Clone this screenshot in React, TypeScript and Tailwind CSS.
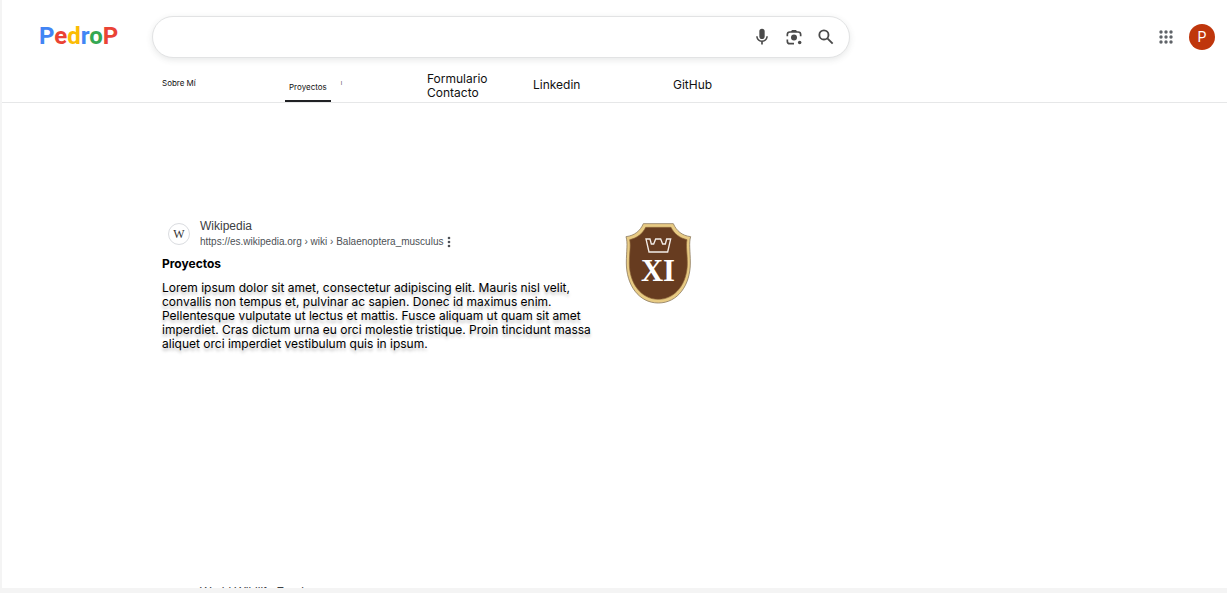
import React from "react";

const logoLetters = [
  { char: "P", color: "text-[#4285f4]" },
  { char: "e", color: "text-[#ea4335]" },
  { char: "d", color: "text-[#fbbc05]" },
  { char: "r", color: "text-[#4285f4]" },
  { char: "o", color: "text-[#34a853]" },
  { char: "P", color: "text-[#ea4335]" },
];

function MicIcon() {
  return (
    <svg viewBox="0 0 24 24" className="size-5" fill="currentColor" aria-hidden="true">
      <path d="M12 14.5c1.8 0 3.2-1.4 3.2-3.2V5.2a3.2 3.2 0 0 0-6.4 0v6.1c0 1.8 1.4 3.2 3.2 3.2z" />
      <path d="M17.2 11c0 2.9-2.3 5.1-5.2 5.1S6.800 13.900 6.800 11H5c0 3.500 2.600 6.300 6 6.800V21h2v-3.200c3.400-.5 6-3.300 6-6.800z" />
    </svg>
  );
}

function LensIcon() {
  return (
    <svg viewBox="0 0 24 24" className="size-5" fill="none" stroke="currentColor" strokeWidth="2" aria-hidden="true">
      <path d="M4 11V9a3 3 0 0 1 3-3h10a3 3 0 0 1 3 3v2M4 15v2a3 3 0 0 0 3 3h5" />
      <path d="M8 6l1.500-2.500h5L16 6z" fill="currentColor" stroke="none" />
      <circle cx="12" cy="12.500" r="3.600" fill="currentColor" stroke="none" />
      <circle cx="18.800" cy="18.500" r="2.100" fill="currentColor" stroke="none" />
    </svg>
  );
}

function SearchIcon() {
  return (
    <svg viewBox="0 0 24 24" className="size-5" fill="none" stroke="currentColor" strokeWidth="2.200" aria-hidden="true">
      <circle cx="9.500" cy="9.500" r="5.500" />
      <path d="M13.700 13.700L20 20" />
    </svg>
  );
}

function AppsIcon() {
  const steps = [3, 8, 13];
  return (
    <svg viewBox="0 0 16 16" className="size-4" fill="currentColor" aria-hidden="true">
      {steps.map((y) => steps.map((x) => <circle key={`${x}-${y}`} cx={x} cy={y} r="1.700" />))}
    </svg>
  );
}

function DotsIcon() {
  return (
    <svg viewBox="0 0 4 12" className="h-3 w-1" fill="currentColor" aria-hidden="true">
      <circle cx="2" cy="2" r="1.300" />
      <circle cx="2" cy="6" r="1.300" />
      <circle cx="2" cy="10" r="1.300" />
    </svg>
  );
}

function Shield() {
  return (
    <svg viewBox="45 22 201 246" className="h-[82px] w-[67px]" role="img" aria-label="XI">
      <path
        d="M100 27H190C199 48 216 63 242 66C236 85 241 110 241 145C241 210 204 265 145 265C86 265 49 210 49 145C49 110 54 85 48 66C74 63 91 48 100 27Z"
        fill="#e8cb84"
        stroke="#8f7d62"
        strokeWidth="2.500"
      />
      <path
        d="M107 38H183C193 58 209 70 231 75C227 94 232 115 232 146C232 204 198 254 145 254C92 254 58 204 58 146C58 115 63 94 59 75C81 70 97 58 107 38Z"
        fill="#673c20"
        stroke="#8a6238"
        strokeWidth="2"
      />
      <path
        d="M108 73H120L124 88H131L137 73H152L158 88H166L170 73H182L173 112H117Z"
        fill="none"
        stroke="#f4ede8"
        strokeWidth="4"
      />
      <text
        x="144"
        y="198"
        textAnchor="middle"
        fill="#ffffff"
        className="font-['Liberation_Serif',serif] text-[92px] font-bold"
      >
        XI
      </text>
    </svg>
  );
}

function Header() {
  return (
    <header className="flex h-[72px] shrink-0 items-center pr-3">
      <a
        href="#inicio"
        aria-label="PedroP"
        className="w-[150px] shrink-0 pl-[37px] font-[Roboto,sans-serif] text-2xl font-bold"
      >
        {logoLetters.map((l, i) => (
          <span key={i} className={l.color}>
            {l.char}
          </span>
        ))}
      </a>
      <form
        role="search"
        onSubmit={(e) => e.preventDefault()}
        className="mt-0.5 flex h-[42px] max-w-[698px] flex-1 items-center gap-3 rounded-full border border-[#e2e3e4] bg-white pr-[13px] pl-5 text-[#4a4a4a] shadow-[0_2px_6px_rgba(60,64,67,0.12)]"
      >
        <input type="text" aria-label="Buscar" className="min-w-0 flex-1 bg-transparent text-base outline-none" />
        <button type="button" aria-label="Buscar por voz">
          <MicIcon />
        </button>
        <button type="button" aria-label="Buscar por imagen">
          <LensIcon />
        </button>
        <button type="submit" aria-label="Buscar">
          <SearchIcon />
        </button>
      </form>
      <div className="mt-0.5 ml-auto flex items-center gap-[15px]">
        <button type="button" aria-label="Aplicaciones" className="text-[#5f6368]">
          <AppsIcon />
        </button>
        <button
          type="button"
          aria-label="Cuenta"
          className="flex size-[26px] items-center justify-center rounded-full bg-[#bf360c] font-[Roboto,sans-serif] text-sm text-white"
        >
          P
        </button>
      </div>
    </header>
  );
}

function Nav() {
  return (
    <nav className="flex h-[31px] shrink-0 items-stretch border-b border-[#e6e7e8] pl-40 text-xs leading-[14px] text-[#111111]">
      <a href="#sobre-mi" className="w-[123px] pt-1 text-[8px]">
        Sobre Mí
      </a>
      <div className="flex w-[142px] gap-2.5">
        <a
          href="#proyectos"
          aria-current="page"
          className="border-b-2 border-[#202124] px-1 pt-2 text-[8px]"
        >
          Proyectos
        </a>
        <span className="pt-1 text-[6px] text-[#555555]" aria-hidden="true">
          ı
        </span>
      </div>
      <a href="#contacto" className="w-[106px]">
        Formulario
        <br />
        Contacto
      </a>
      <a href="#linkedin" className="w-[140px] pt-1.5">
        Linkedin
      </a>
      <a href="#github" className="pt-1.5">
        GitHub
      </a>
    </nav>
  );
}

export default function App() {
  return (
    <div className="h-screen bg-[#f4f4f4] pb-[5px] pl-0.5 font-[Inter,sans-serif] text-black">
      <div className="flex h-full flex-col overflow-hidden bg-white">
        <Header />
        <Nav />
        <main className="min-h-0 flex-1 overflow-hidden pt-[115px] pl-40">
          <article className="flex items-start gap-[31px]">
            <div className="w-[432px]">
              <div className="flex items-center gap-2.5 pl-1.5 font-['Liberation_Sans',sans-serif]">
                <span className="flex size-[22px] items-center justify-center rounded-full border border-[#dadce0] font-['Liberation_Serif',serif] text-xs text-[#333333]">
                  W
                </span>
                <div>
                  <p className="text-xs leading-4 text-[#3c4043]">Wikipedia</p>
                  <div className="flex items-center gap-1 text-[#4d5156]">
                    <a href="#proyectos" className="text-[10px] leading-[15px]">
                      https://es.wikipedia.org › wiki › Balaenoptera_musculus
                    </a>
                    <button type="button" aria-label="Más opciones">
                      <DotsIcon />
                    </button>
                  </div>
                </div>
              </div>
              <h2 className="mt-2 text-xs leading-[14px] font-bold">Proyectos</h2>
              <p className="mt-2.5 text-xs leading-[14px] text-shadow-[0_3px_3px_rgba(0,0,0,0.25)]">
                Lorem ipsum dolor sit amet, consectetur adipiscing elit. Mauris nisl velit, convallis non tempus et,
                pulvinar ac sapien. Donec id maximus enim. Pellentesque vulputate ut lectus et mattis. Fusce aliquam ut
                quam sit amet imperdiet. Cras dictum urna eu orci molestie tristique. Proin tincidunt massa aliquet orci
                imperdiet vestibulum quis in ipsum.
              </p>
            </div>
            <div className="pt-1">
              <Shield />
            </div>
          </article>
          <p className="mt-[233px] pl-[38px] font-['Liberation_Sans',sans-serif] text-xs leading-4 text-[#3c4043]">
            World Wildlife Fund
          </p>
        </main>
      </div>
    </div>
  );
}
